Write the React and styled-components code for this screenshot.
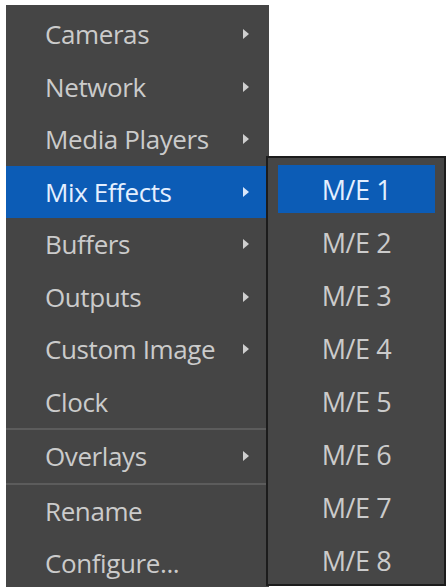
import React from "react";
import styled, { createGlobalStyle } from "styled-components";

const Global = createGlobalStyle`
  html, body { margin: 0; padding: 0; background: #ffffff; overflow: hidden; }
  body { font-family: "Open Sans", "Noto Sans", sans-serif; }
`;

const Page = styled.div`
  width: 448px;
  height: 587px;
  padding: 5px 0 0 6px;
  box-sizing: border-box;
`;

const Menu = styled.ul`
  position: relative;
  list-style: none;
  margin: 0;
  padding: 3px 0 0;
  width: 263px;
  background: #454545;
  display: flex;
  flex-direction: column;
`;

const Item = styled.li`
  position: relative;
  height: 52.5px;
  flex: none;
  display: flex;
  align-items: center;
  justify-content: space-between;
  padding: 0 20px 0 39px;
  background: ${(p) => (p.$active ? "#0c5cb6" : "transparent")};
  color: ${(p) => (p.$active ? "#e4efff" : "#cbcbcb")};
  font-size: 26px;
  letter-spacing: -0.4px;
  white-space: nowrap;
`;

const Separator = styled.li`
  height: 2px;
  flex: none;
  background: #5c5c5c;
`;

const Arrow = styled.span`
  width: 0;
  height: 0;
  border-top: 5px solid transparent;
  border-bottom: 5px solid transparent;
  border-left: 6px solid ${(p) => (p.$active ? "#d8e6fa" : "#cfcfcf")};
`;

const Submenu = styled.ul`
  position: absolute;
  top: -9.5px;
  left: 260px;
  list-style: none;
  margin: 0;
  padding: 7px 9px 0 10px;
  width: 180px;
  box-sizing: border-box;
  background: #464646;
  border: 2px solid #1c1c1c;
  display: flex;
  flex-direction: column;
  gap: 5px;
`;

const SubItem = styled.li`
  height: 48px;
  flex: none;
  display: flex;
  align-items: center;
  justify-content: center;
  background: ${(p) => (p.$active ? "#0c5cb6" : "transparent")};
  color: ${(p) => (p.$active ? "#e4efff" : "#cbcbcb")};
  font-size: 27px;
  letter-spacing: -0.4px;
`;

const items = [
  { label: "Cameras", arrow: true },
  { label: "Network", arrow: true },
  { label: "Media Players", arrow: true },
  { label: "Mix Effects", arrow: true, active: true, sub: true },
  { label: "Buffers", arrow: true },
  { label: "Outputs", arrow: true },
  { label: "Custom Image", arrow: true },
  { label: "Clock" },
  { sep: true },
  { label: "Overlays", arrow: true },
  { sep: true },
  { label: "Rename" },
  { label: "Configure..." },
];

const subItems = ["M/E 1", "M/E 2", "M/E 3", "M/E 4", "M/E 5", "M/E 6", "M/E 7", "M/E 8"];

export default function App() {
  return (
    <Page>
      <Global />
      <Menu>
        {items.map((it, i) =>
          it.sep ? (
            <Separator key={i} />
          ) : (
            <Item key={i} $active={it.active}>
              <span>{it.label}</span>
              {it.arrow && <Arrow $active={it.active} />}
              {it.sub && (
                <Submenu>
                  {subItems.map((s, j) => (
                    <SubItem key={s} $active={j === 0}>
                      {s}
                    </SubItem>
                  ))}
                </Submenu>
              )}
            </Item>
          )
        )}
      </Menu>
    </Page>
  );
}
